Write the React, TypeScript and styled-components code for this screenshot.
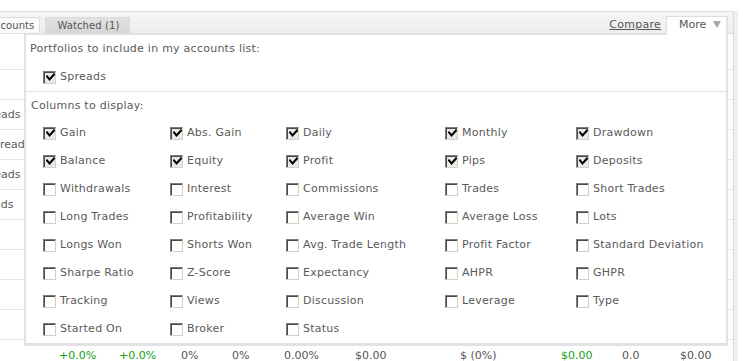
import React from "react";
import styled, { createGlobalStyle } from "styled-components";

const Global = createGlobalStyle`
  html, body { margin: 0; padding: 0; background: #fff; }
  body {
    font-family: "DejaVu Sans", Verdana, sans-serif;
    font-size: 11px;
    letter-spacing: 0.25px;
    color: #5a5a5a;
    overflow: hidden;
  }
`;

const Page = styled.div`
  padding-top: 11px;
  width: 743px;
  height: 361px;
  box-sizing: border-box;
  overflow: hidden;
`;

const Frame = styled.div`
  position: relative;
  width: 734px;
  box-sizing: border-box;
  border-top: 1px solid #dcdcdc;
  border-right: 1px solid #dadada;
  box-shadow: 4px 0 0 #efefef;
  height: 360px;
`;

const Header = styled.div`
  height: 21px;
  display: flex;
  align-items: flex-end;
  background: linear-gradient(#f6f6f6, #ececec);
  border-bottom: 1px solid #dedede;
`;

const TabList = styled.div`
  display: flex;
  align-items: flex-end;
  gap: 5px;
  margin-left: -42px;
`;

const Tab = styled.div<{ $active?: boolean }>`
  height: 16px;
  line-height: 16px;
  box-sizing: border-box;
  padding: ${(p) => (p.$active ? "0 5px 0 11px" : "0 9px 0 11px")};
  font-size: 10px;
  letter-spacing: 0.1px;
  border: 1px solid #dcdcdc;
  border-bottom: none;
  white-space: nowrap;
  color: #555;
  background: ${(p) =>
    p.$active ? "#fafafa" : "linear-gradient(#e2e2e2, #d6d6d6)"};
`;

const Spacer = styled.div`
  flex: 1;
`;

const CompareLink = styled.a`
  color: #555;
  text-decoration: underline;
  align-self: center;
  margin-right: 5px;
  margin-top: 4px;
  cursor: pointer;
`;

const MoreButton = styled.div`
  position: relative;
  z-index: 3;
  width: 62px;
  height: 19px;
  margin-bottom: -2px;
  margin-right: 5px;
  box-sizing: border-box;
  background: #fff;
  border: 1px solid #dedede;
  border-right: 2px solid #e2e2e2;
  border-bottom: none;
  display: flex;
  align-items: center;
  padding: 0 5px 3px 12px;
  justify-content: space-between;
  color: #555;
  letter-spacing: 0;
`;

const Caret = styled.span`
  width: 0;
  height: 0;
  border-left: 4px solid transparent;
  border-right: 4px solid transparent;
  border-top: 7px solid #a8a8a8;
`;

const HeadRow = styled.div`
  height: 35px;
  border-bottom: 1px solid #e6e6e6;
`;

const Row = styled.div`
  height: 29px;
  border-bottom: 1px solid #e6e6e6;
  display: grid;
  grid-template-columns: 59px 60px 62px 51px 52px 71px 105px 101px 61px 58px 1fr;
  align-items: center;
  white-space: nowrap;
  letter-spacing: 0;
`;

const NameCell = styled.div<{ $shift: number }>`
  overflow: hidden;
  span {
    display: inline-block;
    margin-left: ${(p) => p.$shift}px;
  }
`;

const Cell = styled.div<{ $green?: boolean }>`
  color: ${(p) => (p.$green ? "#14a014" : "#555")};
  padding-top: 1px;
`;

const Panel = styled.div`
  position: absolute;
  z-index: 2;
  top: 21px;
  left: 24px;
  width: 704px;
  height: 313px;
  box-sizing: border-box;
  background: #fff;
  border: 2px solid #e2e2e2;
  border-bottom-width: 3px;
`;

const Section = styled.div<{ $first?: boolean }>`
  padding: ${(p) => (p.$first ? "7px 4px 7px 4px" : "7px 5px 0 5px")};
  border-bottom: ${(p) => (p.$first ? "1px solid #e2e2e2" : "none")};
`;

const SectionTitle = styled.div`
  line-height: 14px;
`;

const SingleRow = styled.div`
  margin-top: 14px;
  padding-left: 13px;
`;

const Grid = styled.div`
  margin-top: 13px;
  padding-left: 12px;
  display: grid;
  grid-template-columns: 127px 116px 159px 131px 1fr;
  row-gap: 14px;
`;

const Option = styled.label`
  display: flex;
  align-items: center;
  gap: 4px;
  height: 14px;
  line-height: 14px;
  white-space: nowrap;
`;

const Box = styled.span<{ $checked?: boolean }>`
  width: 13px;
  height: 13px;
  box-sizing: border-box;
  flex: none;
  border-style: solid;
  border-width: 1px;
  border-color: #7c7c7c #d4d0c8 #d4d0c8 #7c7c7c;
  box-shadow: inset 1px 1px 0 #4a4a4a;
  background: ${(p) => (p.$checked ? "#e9e9e9" : "#fff")};
  display: flex;
  align-items: center;
  justify-content: center;
  padding: 1px 0 0 1px;
`;

const CheckBox: React.FC<{ checked?: boolean; label: string }> = ({
  checked,
  label,
}) => (
  <Option>
    <Box $checked={checked}>
      {checked && (
        <svg width="9" height="9" viewBox="0 0 9 9">
          <path
            d="M1 3.5 L3.5 6.5 L8 1.5"
            fill="none"
            stroke="#000"
            strokeWidth="2"
            strokeLinecap="square"
          />
        </svg>
      )}
    </Box>
    <span>{label}</span>
  </Option>
);

const columns: [string, boolean][] = [
  ["Gain", true],
  ["Abs. Gain", true],
  ["Daily", true],
  ["Monthly", true],
  ["Drawdown", true],
  ["Balance", true],
  ["Equity", true],
  ["Profit", true],
  ["Pips", true],
  ["Deposits", true],
  ["Withdrawals", false],
  ["Interest", false],
  ["Commissions", false],
  ["Trades", false],
  ["Short Trades", false],
  ["Long Trades", false],
  ["Profitability", false],
  ["Average Win", false],
  ["Average Loss", false],
  ["Lots", false],
  ["Longs Won", false],
  ["Shorts Won", false],
  ["Avg. Trade Length", false],
  ["Profit Factor", false],
  ["Standard Deviation", false],
  ["Sharpe Ratio", false],
  ["Z-Score", false],
  ["Expectancy", false],
  ["AHPR", false],
  ["GHPR", false],
  ["Tracking", false],
  ["Views", false],
  ["Discussion", false],
  ["Leverage", false],
  ["Type", false],
  ["Started On", false],
  ["Broker", false],
  ["Status", false],
];

const rowNames: { name: string; shift: number }[] = [
  { name: "", shift: 0 },
  { name: "Spreads", shift: -24 },
  { name: "Spreads", shift: -14 },
  { name: "Spreads", shift: -24 },
  { name: "Spreads", shift: -31 },
  { name: "", shift: 0 },
  { name: "", shift: 0 },
  { name: "", shift: 0 },
  { name: "", shift: 0 },
];

const values: { v: string; green?: boolean }[] = [
  { v: "+0.0%", green: true },
  { v: "+0.0%", green: true },
  { v: "0%" },
  { v: "0%" },
  { v: "0.00%" },
  { v: "$0.00" },
  { v: "$ (0%)" },
  { v: "$0.00", green: true },
  { v: "0.0" },
  { v: "$0.00" },
];

export default function App() {
  return (
    <Page>
      <Global />
      <Frame>
        <Header>
          <TabList>
            <Tab $active>My Accounts</Tab>
            <Tab>Watched (1)</Tab>
          </TabList>
          <Spacer />
          <CompareLink>Compare</CompareLink>
          <MoreButton>
            <span>More</span>
            <Caret />
          </MoreButton>
        </Header>
        <HeadRow />
        {rowNames.map((r, i) => (
          <Row key={i}>
            <NameCell $shift={r.shift}>
              <span>{r.name}</span>
            </NameCell>
          </Row>
        ))}
        <Row>
          <NameCell $shift={0}>
            <span />
          </NameCell>
          {values.map((c, j) => (
            <Cell key={j} $green={c.green}>
              {c.v}
            </Cell>
          ))}
        </Row>
        <Panel>
          <Section $first>
            <SectionTitle>Portfolios to include in my accounts list:</SectionTitle>
            <SingleRow>
              <CheckBox checked label="Spreads" />
            </SingleRow>
          </Section>
          <Section>
            <SectionTitle>Columns to display:</SectionTitle>
            <Grid>
              {columns.map(([label, checked]) => (
                <CheckBox key={label} label={label} checked={checked} />
              ))}
            </Grid>
          </Section>
        </Panel>
      </Frame>
    </Page>
  );
}
